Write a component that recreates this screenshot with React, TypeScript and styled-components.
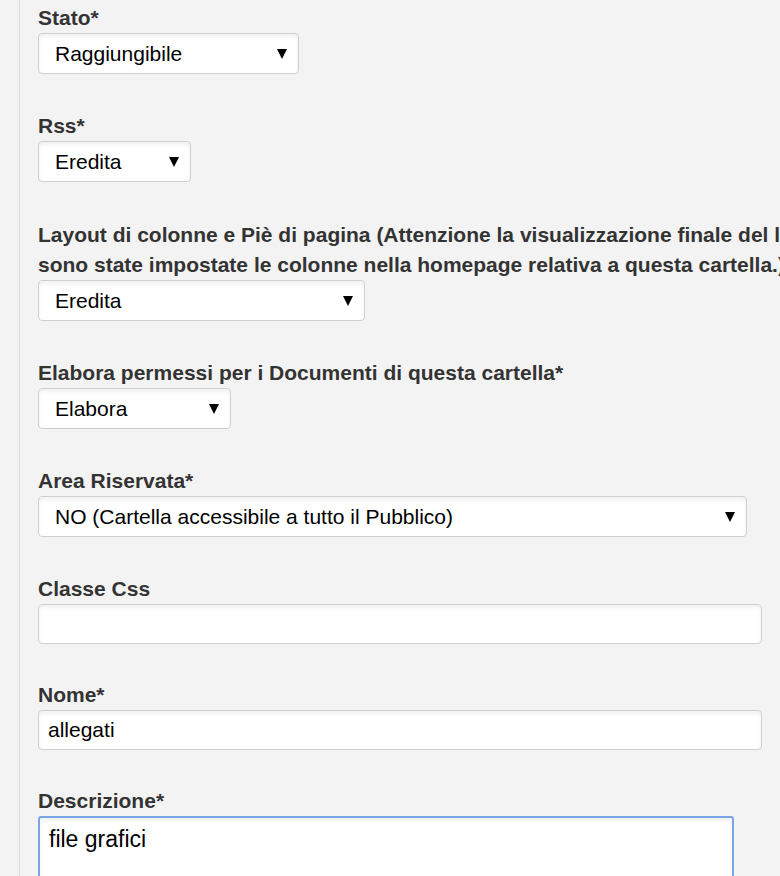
import styled, { createGlobalStyle } from 'styled-components';

const GlobalStyle = createGlobalStyle`
  html, body {
    margin: 0;
    padding: 0;
    background: #f3f3f3;
    overflow: hidden;
  }
  body {
    font-family: "Liberation Sans", Arial, sans-serif;
  }
`;

const Page = styled.div`
  display: flex;
  min-height: 876px;
`;

const Gutter = styled.div`
  width: 19px;
  flex: none;
  border-right: 1px solid #dcdcdc;
`;

const Form = styled.form`
  flex: 1;
  padding: 3px 0 0 18px;
`;

const Group = styled.div<{ $gap?: number }>`
  margin-bottom: ${(p) => p.$gap ?? 37}px;
`;

const Label = styled.label`
  display: block;
  font-size: 21px;
  font-weight: bold;
  line-height: 30px;
  color: #333;
  white-space: nowrap;
`;

const SelectWrap = styled.div<{ $width: number }>`
  position: relative;
  width: ${(p) => p.$width}px;
`;

const Select = styled.select`
  appearance: none;
  -webkit-appearance: none;
  display: block;
  box-sizing: border-box;
  width: 100%;
  height: 41px;
  margin: 0;
  padding: 0 40px 0 16px;
  border: 1px solid #cfcfcf;
  border-radius: 4px;
  background: #fff;
  box-shadow: inset 0 3px 4px rgba(0, 0, 0, 0.06);
  font-family: "Liberation Sans", Arial, sans-serif;
  font-size: 21px;
  color: #000;
  outline: none;
`;

const Arrow = styled.span`
  position: absolute;
  right: 12px;
  top: 16px;
  width: 0;
  height: 0;
  border-left: 5px solid transparent;
  border-right: 5px solid transparent;
  border-top: 10px solid #000;
  pointer-events: none;
`;

const TextInput = styled.input<{ $width: number }>`
  display: block;
  box-sizing: border-box;
  width: ${(p) => p.$width}px;
  height: 40px;
  margin: 0;
  padding: 0 9px;
  border: 1px solid #cfcfcf;
  border-radius: 4px;
  background: #fff;
  box-shadow: inset 0 3px 4px rgba(0, 0, 0, 0.06);
  font-family: "Liberation Sans", Arial, sans-serif;
  font-size: 21px;
  color: #000;
  outline: none;
`;

const TextArea = styled.textarea`
  display: block;
  box-sizing: border-box;
  width: 696px;
  height: 120px;
  margin: 0;
  padding: 6px 9px;
  border: 2px solid #7aa5e6;
  border-radius: 3px;
  background: #fff;
  box-shadow: inset 0 3px 4px rgba(0, 0, 0, 0.06);
  font-family: "Liberation Sans", Arial, sans-serif;
  font-size: 23px;
  line-height: 30px;
  color: #000;
  resize: none;
  outline: none;
`;

type SelectFieldProps = {
  label: React.ReactNode;
  value: string;
  width: number;
  gap?: number;
};

const SelectField = ({ label, value, width, gap }: SelectFieldProps) => (
  <Group $gap={gap}>
    <Label>{label}</Label>
    <SelectWrap $width={width}>
      <Select defaultValue={value}>
        <option>{value}</option>
      </Select>
      <Arrow />
    </SelectWrap>
  </Group>
);

export default function App() {
  return (
    <>
      <GlobalStyle />
      <Page>
        <Gutter />
        <Form>
          <SelectField label="Stato*" value="Raggiungibile" width={261} />
          <SelectField label="Rss*" value="Eredita" width={153} gap={38} />
          <SelectField
            label={
              <>
                Layout di colonne e Piè di pagina (Attenzione la visualizzazione finale del layout dipende da come
                <br />
                sono state impostate le colonne nella homepage relativa a questa cartella.)
              </>
            }
            value="Eredita"
            width={327}
          />
          <SelectField
            label="Elabora permessi per i Documenti di questa cartella*"
            value="Elabora"
            width={193}
          />
          <SelectField
            label="Area Riservata*"
            value="NO (Cartella accessibile a tutto il Pubblico)"
            width={709}
          />
          <Group $gap={36}>
            <Label>Classe Css</Label>
            <TextInput $width={724} defaultValue="" />
          </Group>
          <Group $gap={36}>
            <Label>Nome*</Label>
            <TextInput $width={724} defaultValue="allegati" />
          </Group>
          <Group>
            <Label>Descrizione*</Label>
            <TextArea defaultValue="file grafici" />
          </Group>
        </Form>
      </Page>
    </>
  );
}
